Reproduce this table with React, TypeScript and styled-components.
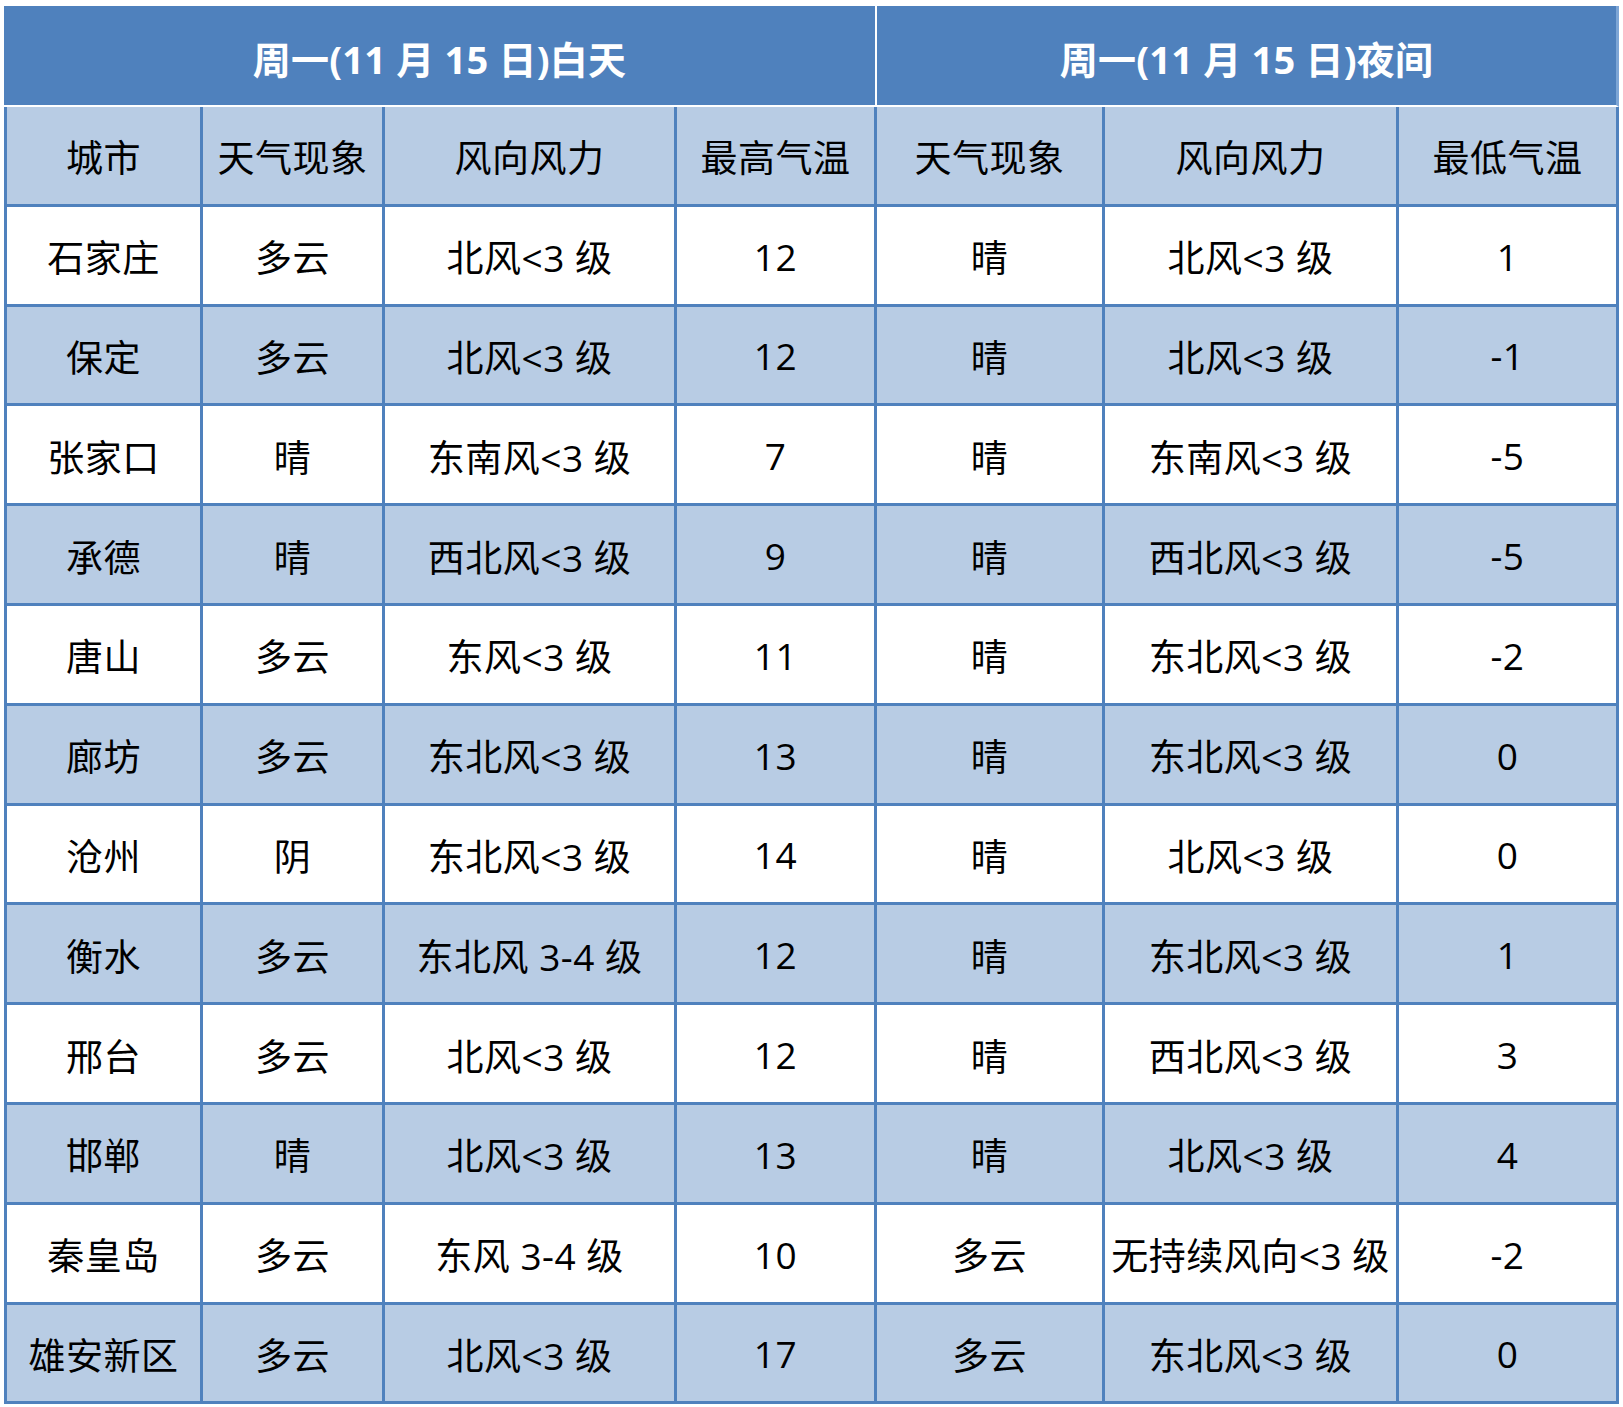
import React from "react";
import styled, { createGlobalStyle } from "styled-components";

const Global = createGlobalStyle`
  html, body { margin: 0; padding: 0; background: #ffffff; }
  body { font-family: "Open Sans", "Noto Sans CJK SC", sans-serif; }
`;

const BLUE = "#4f81bd";
const LIGHT = "#b8cce4";

const Page = styled.div`
  padding: 6px 0 0 4px;
`;

const Grid = styled.div`
  display: grid;
  grid-template-columns: 199px 182px 292px 200px 228px 294px 220px;
  grid-template-rows: 101px;
  grid-auto-rows: 99.8px;
  width: 1615px;
`;

const TitleCell = styled.div<{ $span: number; $divider?: boolean }>`
  grid-column: span ${(p) => p.$span};
  box-sizing: border-box;
  background: ${BLUE};
  border-bottom: 2px solid #ffffff;
  border-right: ${(p) => (p.$divider ? "2px solid #ffffff" : "3px solid #7ea6d6")};
  display: flex;
  align-items: center;
  justify-content: center;
  color: #ffffff;
  font-weight: 700;
  font-size: 38px;
  letter-spacing: 0.2px;
  padding-top: 3px;
  white-space: nowrap;
`;

const Cell = styled.div<{ $shade: boolean; $first?: boolean }>`
  box-sizing: border-box;
  background: ${(p) => (p.$shade ? LIGHT : "#ffffff")};
  border-right: 3px solid ${BLUE};
  border-bottom: 3px solid ${BLUE};
  border-left: ${(p) => (p.$first ? `3px solid ${BLUE}` : "none")};
  display: flex;
  align-items: center;
  justify-content: center;
  color: #000000;
  font-size: 37px;
  letter-spacing: 0.5px;
  white-space: nowrap;
  overflow: hidden;
  padding-top: 2px;
`;

const headers = ["城市", "天气现象", "风向风力", "最高气温", "天气现象", "风向风力", "最低气温"];

const rows: string[][] = [
  ["石家庄", "多云", "北风<3 级", "12", "晴", "北风<3 级", "1"],
  ["保定", "多云", "北风<3 级", "12", "晴", "北风<3 级", "-1"],
  ["张家口", "晴", "东南风<3 级", "7", "晴", "东南风<3 级", "-5"],
  ["承德", "晴", "西北风<3 级", "9", "晴", "西北风<3 级", "-5"],
  ["唐山", "多云", "东风<3 级", "11", "晴", "东北风<3 级", "-2"],
  ["廊坊", "多云", "东北风<3 级", "13", "晴", "东北风<3 级", "0"],
  ["沧州", "阴", "东北风<3 级", "14", "晴", "北风<3 级", "0"],
  ["衡水", "多云", "东北风 3-4 级", "12", "晴", "东北风<3 级", "1"],
  ["邢台", "多云", "北风<3 级", "12", "晴", "西北风<3 级", "3"],
  ["邯郸", "晴", "北风<3 级", "13", "晴", "北风<3 级", "4"],
  ["秦皇岛", "多云", "东风 3-4 级", "10", "多云", "无持续风向<3 级", "-2"],
  ["雄安新区", "多云", "北风<3 级", "17", "多云", "东北风<3 级", "0"],
];

export default function App() {
  return (
    <Page>
      <Global />
      <Grid>
        <TitleCell $span={4} $divider>周一(11 月 15 日)白天</TitleCell>
        <TitleCell $span={3}>周一(11 月 15 日)夜间</TitleCell>
        {headers.map((h, i) => (
          <Cell key={`h${i}`} $shade $first={i === 0}>
            {h}
          </Cell>
        ))}
        {rows.map((r, ri) =>
          r.map((c, ci) => (
            <Cell key={`${ri}-${ci}`} $shade={ri % 2 === 1} $first={ci === 0}>
              {c}
            </Cell>
          ))
        )}
      </Grid>
    </Page>
  );
}
